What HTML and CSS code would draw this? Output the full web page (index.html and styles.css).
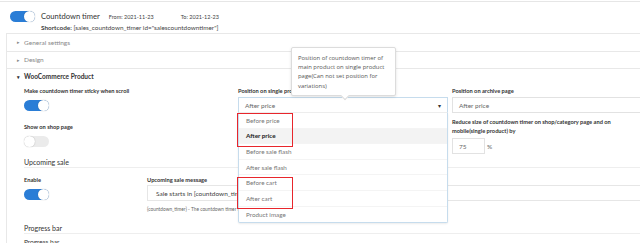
FILE: index.html
```html
<!DOCTYPE html>
<html>
<head>
<meta charset="utf-8">
<link rel="stylesheet" href="styles.css">
</head>
<body>
<div class="page">
  <div class="head">
    <span class="toggle on"></span>
    <div class="head-text">
      <div class="title-row">
        <span class="title">Countdown timer</span>
        <span class="date"><b>From:</b> 2021-11-23</span>
        <span class="date"><b>To:</b> 2021-12-23</span>
      </div>
      <div class="shortcode"><b>Shortcode:</b> [sales_countdown_timer id="salescountdowntimer"]</div>
    </div>
  </div>
  <div class="acc">
    <div class="acc-row"><span class="arr">&#9656;</span>General settings</div>
    <div class="acc-row"><span class="arr">&#9656;</span>Design</div>
    <div class="acc-title"><span class="arr dark">&#9662;</span>WooCommerce Product</div>
    <div class="acc-open">
      <div class="grid3">
        <div class="col">
          <div class="label">Make countdown timer sticky when scroll</div>
          <span class="toggle on t1"></span>
          <div class="label l2">Show on shop page</div>
          <span class="toggle off t2"></span>
        </div>
        <div class="col">
          <div class="label">Position on single product page</div>
          <div class="select focus"><span>After price</span><span class="caret">&#9662;</span></div>
        </div>
        <div class="col">
          <div class="label">Position on archive page</div>
          <div class="select wide"><span>After price</span></div>
          <div class="label l3">Reduce size of countdown timer on shop/category page and on mobile(single product) by</div>
          <div class="pct"><div class="num">75</div><span>%</span></div>
        </div>
      </div>
      <div class="section">Upcoming sale</div>
      <div class="upcoming">
        <div class="ucol1">
          <div class="label">Enable</div>
          <span class="toggle on t3"></span>
        </div>
        <div class="ucol2">
          <div class="label">Upcoming sale message</div>
          <div class="msg">Sale starts in [countdown_timer]</div>
          <div class="hint">{countdown_timer} - The countdown timer that you set on tab design</div>
        </div>
      </div>
      <div class="section s2">Progress bar</div>
      <div class="label l4">Progress bar</div>
    </div>
  </div>

  <div class="dropdown">
    <div class="opt">Before price</div>
    <div class="opt sel">After price</div>
    <div class="opt">Before sale flash</div>
    <div class="opt">After sale flash</div>
    <div class="opt">Before cart</div>
    <div class="opt">After cart</div>
    <div class="opt">Product image</div>
  </div>
  <div class="mark m1"></div>
  <div class="mark m2"></div>

  <div class="tip">Position of countdown timer of main product on single product page(Can not set position for variations)<span class="tip-arrow"></span></div>
</div>
</body>
</html>
```
FILE: styles.css
```css
* { box-sizing: border-box; }
html, body { margin: 0; padding: 0; background: #fff; overflow: hidden; }
body { width: 640px; height: 243px; font-family: Lato, "Liberation Sans", sans-serif; color: #333; }
.page { position: relative; margin-top: 1px; border-top: 1px solid #e6e6e6; height: 242px; }

.head { display: flex; align-items: flex-start; padding: 8px 0 0 10px; height: 31px; }
.head-text { margin-left: 6px; }
.title-row { display: flex; align-items: baseline; height: 12px; }
.title { font-size: 7.6px; color: #333; margin-top: 1px; }
.date { font-size: 5.5px; color: #444; margin-left: 9px; width: 63px; }
.date b { font-weight: 400; }
.shortcode { font-size: 6.4px; color: #444; margin-top: 2px; }
.shortcode b { font-weight: 700; }

.toggle { display: inline-block; position: relative; width: 25px; height: 11px; border-radius: 6px; flex: none; }
.toggle::after { content: ""; position: absolute; top: 0; width: 11px; height: 11px; border-radius: 50%; background: #fff; box-shadow: 0 0 1px rgba(0,0,0,.35); }
.toggle.on { background: #2a7dd6; }
.toggle.on::after { right: 0; }
.toggle.off { background: #ebebeb; }
.toggle.off::after { left: 0; }
.head .toggle { margin-top: 1px; }

.acc { margin-left: 6px; border: 1px solid #e8e8e8; border-right: none; border-bottom: none; }
.acc-row { height: 17.5px; border-bottom: 1px solid #e8e8e8; display: flex; align-items: center; font-size: 6.5px; color: #888; padding-left: 10px; }
.arr { font-size: 5px; color: #888; width: 7px; display: inline-block; }
.arr.dark { color: #333; }
.acc-title { font-size: 6.5px; font-weight: 700; color: #333; padding: 4px 0 0 10px; height: 18px; }
.acc-open { padding-left: 17px; }

.grid3 { display: grid; grid-template-columns: 214px 214px 220px; height: 65px; }
.label { font-size: 5.7px; font-weight: 700; color: #333; line-height: 8px; }
.col .t1 { margin-top: 5px; }
.l2 { margin-top: 9px; }
.t2 { margin-top: 2px; }
.select { margin-top: 2px; height: 16px; width: 210px; border: 1px solid #e2e2e2; display: flex; align-items: center; justify-content: space-between; padding: 0 6px; font-size: 6.5px; color: #666; }
.select.focus { border-color: #c6dced; border-bottom-color: #eee; }
.select.wide { width: 200px; }
.caret { font-size: 6px; color: #333; }
.l3 { margin-top: 5px; line-height: 8.5px; width: 190px; }
.pct { display: flex; align-items: center; margin-top: 3px; font-size: 6.5px; color: #666; }
.num { width: 33px; height: 16px; border: 1px solid #e2e2e2; padding-left: 6px; display: flex; align-items: center; margin-right: 2px; }

.section { font-size: 7px; color: #333; height: 14px; border-bottom: 1px solid #eee; padding-top: 4px; margin-top: 2px; }
.upcoming { display: flex; height: 51px; padding-top: 8px; }
.ucol1 { width: 123px; }
.ucol1 .t3 { margin-top: 1px; }
.ucol2 { flex: 1; }
.msg { margin-top: 1px; height: 16px; border: 1px solid #e6e6e6; border-right: none; display: flex; align-items: center; padding-left: 8px; font-size: 6.5px; color: #444; }
.hint { font-size: 4.8px; color: #666; margin-top: 5px; white-space: nowrap; }
.section.s2 { margin-top: 0; padding-top: 5px; height: 15px; }
.l4 { margin-top: 4px; font-weight: 400; font-size: 6.5px; }

.dropdown { position: absolute; left: 238px; top: 111px; width: 210px; height: 110px; background: #fff; border: 1px solid #c6dced; border-top: none; border-radius: 0 0 2px 2px; box-shadow: 0 1px 2px rgba(0,0,0,.08); }
.opt { height: 15.6px; display: flex; align-items: center; padding-left: 7px; font-size: 6.3px; color: #777; border-bottom: 1px solid #f4f4f4; }
.opt:last-child { border-bottom: none; }
.opt.sel { background: #f3f3f3; color: #222; font-weight: 700; }
.mark { position: absolute; border: 1.5px solid #e8262c; left: 237px; width: 56px; }
.m1 { top: 111px; height: 34px; }
.m2 { top: 175px; height: 32px; }

.tip { position: absolute; left: 291px; top: 45px; width: 105px; height: 49px; background: #fff; border: 1px solid #dcdcdc; border-radius: 2px; box-shadow: 0 1px 3px rgba(0,0,0,.12); padding: 6px 5px 0 6px; font-size: 5.9px; line-height: 9.2px; color: #555; font-family: "Open Sans", "Noto Sans", sans-serif; }
.tip-arrow { position: absolute; left: 50px; bottom: -4px; width: 6px; height: 6px; background: #fff; border-right: 1px solid #dcdcdc; border-bottom: 1px solid #dcdcdc; transform: rotate(45deg); }
```
